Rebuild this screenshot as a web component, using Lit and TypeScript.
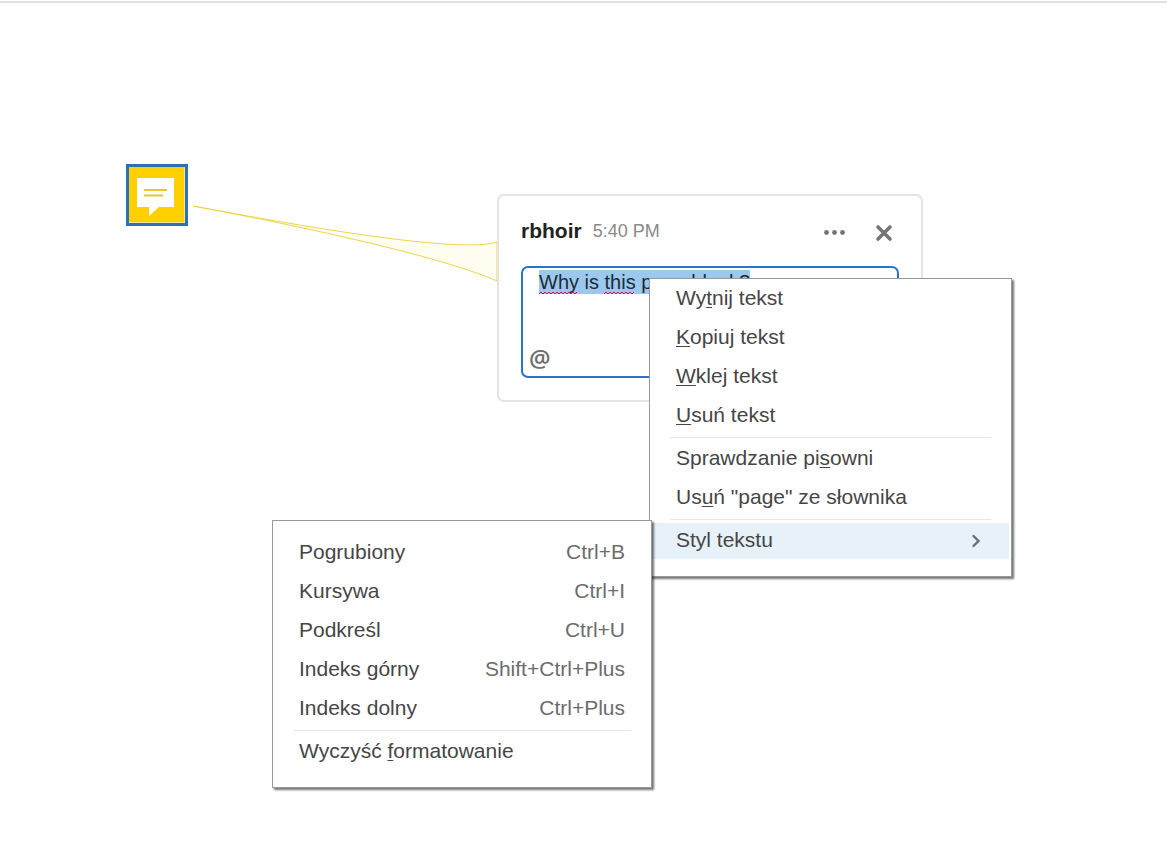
import { LitElement, html, css, svg } from "lit";
import { customElement, property, query } from "lit/decorators.js";

interface Entry {
  before?: string;
  key?: string;
  after?: string;
  shortcut?: string;
  submenu?: boolean;
  separator?: boolean;
}

const EDIT_ENTRIES: Entry[] = [
  { before: "Wy", key: "t", after: "nij tekst" },
  { key: "K", after: "opiuj tekst" },
  { key: "W", after: "klej tekst" },
  { key: "U", after: "suń tekst" },
  { separator: true },
  { before: "Sprawdzanie pi", key: "s", after: "owni" },
  { before: "Us", key: "u", after: "ń \"page\" ze słownika" },
  { separator: true },
  { before: "Styl tekstu", submenu: true },
];

const STYLE_ENTRIES: Entry[] = [
  { before: "Pogrubiony", shortcut: "Ctrl+B" },
  { before: "Kursywa", shortcut: "Ctrl+I" },
  { before: "Podkreśl", shortcut: "Ctrl+U" },
  { before: "Indeks górny", shortcut: "Shift+Ctrl+Plus" },
  { before: "Indeks dolny", shortcut: "Ctrl+Plus" },
  { separator: true },
  { before: "Wyczyść ", key: "f", after: "ormatowanie" },
];

@customElement("context-menu")
class ContextMenu extends LitElement {
  @property({ attribute: false }) entries: Entry[] = [];

  static styles = css`
    :host {
      display: block;
      box-sizing: border-box;
      background: #fff;
      border: 1px solid #999;
      box-shadow: 2px 2px 2px rgba(0, 0, 0, 0.55);
      font: 21px/36px "Liberation Sans", Arial, sans-serif;
    }
    .menu {
      display: flex;
      flex-direction: column;
      gap: 3px;
      padding: var(--menu-top, 2px) 2px 17px;
    }
    .item {
      display: flex;
      justify-content: space-between;
      align-items: center;
      height: 36px;
      margin: 0;
      padding: 0 24px;
      border: 0;
      background: none;
      font: inherit;
      color: #464646;
      text-align: left;
      white-space: pre;
    }
    .open {
      background: #e6f1fa;
    }
    .label {
      padding-bottom: 2px;
    }
    .key {
      text-decoration-thickness: 1px;
      text-underline-offset: 2px;
    }
    .shortcut {
      padding-bottom: 2px;
      color: #6c6c6c;
    }
    .separator {
      height: 1px;
      width: auto;
      margin: 0 18px;
      border: 0;
      background: #e6e6e6;
    }
    .chevron {
      width: 20px;
      height: 20px;
    }
  `;

  render() {
    return html`<div class="menu" role="menu">
      ${this.entries.map((e) =>
        e.separator
          ? html`<hr class="separator" />`
          : html`<button
              class="item ${e.submenu ? "open" : ""}"
              type="button"
              role="menuitem"
            ><span class="label">${e.before}${e.key ? html`<u class="key">${e.key}</u>` : ""}${e.after}</span>${
              e.shortcut ? html`<span class="shortcut">${e.shortcut}</span>` : ""
            }${
              e.submenu
                ? html`<svg class="chevron" viewBox="0 0 20 20" aria-hidden="true">
                    <path d="M8.500 5l5 5-5 5" fill="none" stroke="#6e6e6e" stroke-width="2.4" stroke-linecap="round" />
                  </svg>`
                : ""
            }</button>`
      )}
    </div>`;
  }
}

/* Zig-zag spelling mark of the given width. */
const zigzag = (x: number, width: number) => {
  let d = `M${x} 4`;
  for (let i = 0; i < width; i += 2) d += `l2 ${i % 4 ? 2 : -2}`;
  return svg`<path d=${d} fill="none" stroke="#c2185b" stroke-width="1" />`;
};

@customElement("note-popup")
class NotePopup extends LitElement {
  @query("textarea") box!: HTMLTextAreaElement;

  static styles = css`
    :host {
      display: block;
      box-sizing: border-box;
      padding: 20px 22px 22px;
      background: #fff;
      border: 2px solid #e4e4e4;
      border-radius: 7px;
      font-family: "Liberation Sans", Arial, sans-serif;
    }
    .header {
      display: flex;
      align-items: center;
      gap: 11px;
      height: 30px;
      margin-bottom: 20px;
    }
    .author {
      font-size: 21px;
      line-height: 24px;
      font-weight: 700;
      color: #222;
    }
    .time {
      flex: 1;
      font-size: 18px;
      line-height: 24px;
      color: #8a8a8a;
    }
    .icon {
      display: block;
      width: 24px;
      height: 24px;
      padding: 0;
      margin-top: 4px;
      border: 0;
      background: none;
    }
    .actions {
      display: flex;
      gap: 25px;
      padding-right: 3px;
    }
    .editor {
      position: relative;
      display: flex;
      flex-direction: column;
      align-items: flex-start;
      border: 2px solid #2a74c9;
      border-radius: 7px;
      padding: 2px 5px 4px;
    }
    .text {
      display: block;
      box-sizing: border-box;
      width: 100%;
      height: 74px;
      margin: 0;
      padding: 0 11px;
      border: 0;
      outline: 0;
      resize: none;
      overflow: hidden;
      background: none;
      font: 20px/24px "Liberation Sans", Arial, sans-serif;
      color: #1f2a36;
    }
    .text::selection {
      background: #9bc9ee;
      color: #1f2a36;
    }
    .marks {
      position: absolute;
      left: 16px;
      top: 22px;
      width: 212px;
      height: 6px;
    }
    .mention {
      height: 28px;
      padding: 0 1px;
      border: 0;
      background: none;
      font: 600 24px/28px "Open Sans", sans-serif;
      color: #6e6e6e;
    }
  `;

  firstUpdated() {
    this.box.focus({ preventScroll: true });
    this.box.select();
  }

  render() {
    return html`
      <div class="header">
        <span class="author">rbhoir</span>
        <span class="time">5:40 PM</span>
        <div class="actions">
          <button class="icon" type="button" aria-label="Opcje">
            <svg viewBox="0 0 24 24" fill="#757575">
              <circle cx="3.5" cy="11.500" r="2.4" />
              <circle cx="11.500" cy="11.500" r="2.4" />
              <circle cx="19.500" cy="11.500" r="2.4" />
            </svg>
          </button>
          <button class="icon" type="button" aria-label="Zamknij">
            <svg viewBox="0 0 24 24">
              <path d="M6 6l12 12M18 6L6 18" stroke="#757575" stroke-width="3.6" stroke-linecap="round" />
            </svg>
          </button>
        </div>
      </div>
      <div class="editor">
        <textarea class="text" aria-label="Komentarz" spellcheck="false" .value=${"Why is this page blank?"}></textarea>
        <svg class="marks" viewBox="0 0 212 6" aria-hidden="true">${zigzag(0, 38)}${zigzag(65, 30)}</svg>
        <button class="mention" type="button">@</button>
      </div>
    `;
  }
}

@customElement("app-root")
class AppRoot extends LitElement {
  static styles = css`
    :host {
      display: block;
      padding-top: 1px;
      background: #fff;
    }
    .page {
      position: relative;
      box-sizing: border-box;
      min-height: calc(100vh - 1px);
      border-top: 2px solid #e1e1e1;
    }
    .note {
      position: absolute;
      left: 126px;
      top: 161px;
      width: 62px;
      height: 62px;
      padding: 0;
      border: 0;
      background: none;
    }
    .note-art {
      display: block;
    }
    .leader {
      position: absolute;
      left: 190px;
      top: 197px;
      width: 310px;
      height: 90px;
    }
    .popup {
      position: absolute;
      left: 497px;
      top: 191px;
      width: 426px;
    }
    .edit-menu {
      position: absolute;
      left: 649px;
      top: 275px;
      width: 363px;
    }
    .style-menu {
      --menu-top: 14px;
      position: absolute;
      left: 272px;
      top: 517px;
      width: 380px;
    }
  `;

  render() {
    return html`
      <main class="page">
        <button class="note" type="button" aria-label="Notatka">
          <svg class="note-art" viewBox="0 0 62 62">
            <rect width="62" height="62" fill="#2a72b5" />
            <rect x="3" y="3" width="56" height="56" fill="#f3e3a0" />
            <rect x="3" y="3" width="55" height="55" fill="#ffd000" />
            <path d="M11 14H48V43H33L23 52V43H11Z" fill="#fff" />
            <path d="M18 26H41M18 31.500H37" stroke="#e9c62a" stroke-width="2.200" />
          </svg>
        </button>
        <svg class="leader" viewBox="190 200 310 90" aria-hidden="true">
          <path d="M193 206C300 226 460 254 497 242V281C440 256 300 226 193 206Z" fill="#fffdf0" stroke="#f0d548" stroke-width="1" />
        </svg>
        <note-popup class="popup"></note-popup>
        <context-menu class="edit-menu" .entries=${EDIT_ENTRIES}></context-menu>
        <context-menu class="style-menu" .entries=${STYLE_ENTRIES}></context-menu>
      </main>
    `;
  }
}
